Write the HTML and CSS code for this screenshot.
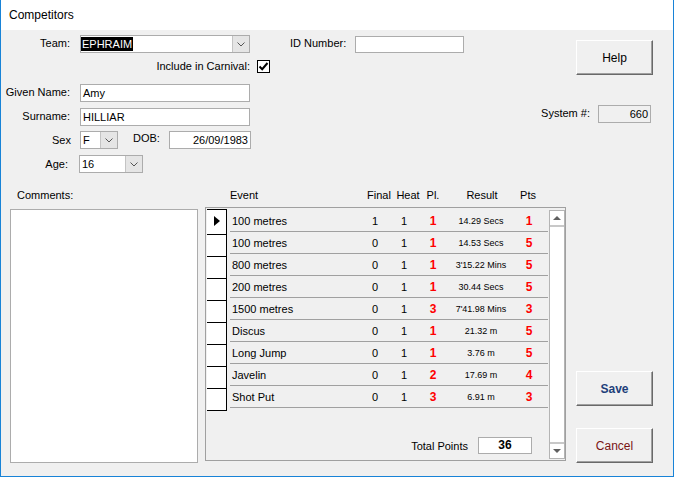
FILE: index.html
```html
<!DOCTYPE html>
<html>
<head>
<meta charset="utf-8">
<link rel="stylesheet" href="styles.css">
</head>
<body>
<div class="window">
  <div class="titlebar">Competitors</div>
  <div class="content">
    <div class="top">
      <div class="form">
        <div class="row r1">
          <span class="lbl w69">Team:</span>
          <div class="combo team">
            <span class="val"><span class="sel">EPHRAIM</span></span>
            <span class="dd"><svg width="8" height="5" viewBox="0 0 8 5"><polyline points="0.5,0.5 4,4 7.5,0.5" fill="none" stroke="#555" stroke-width="1"/></svg></span>
          </div>
          <span class="lbl idlbl">ID Number:</span>
          <div class="input idnum"></div>
        </div>
        <div class="row r2">
          <span class="lbl w249">Include in Carnival:</span>
          <span class="check"><svg width="11" height="11" viewBox="0 0 11 11"><polyline points="1.5,5.5 4.2,8.2 9.5,2" fill="none" stroke="#000" stroke-width="2"/></svg></span>
        </div>
        <div class="row r3">
          <span class="lbl w69">Given Name:</span>
          <div class="input name">Amy</div>
        </div>
        <div class="row r4">
          <span class="lbl w69">Surname:</span>
          <div class="input name">HILLIAR</div>
        </div>
        <div class="row r5">
          <span class="lbl w70 low">Sex</span>
          <div class="combo sex">
            <span class="val">F</span>
            <span class="dd"><svg width="8" height="5" viewBox="0 0 8 5"><polyline points="0.5,0.5 4,4 7.5,0.5" fill="none" stroke="#555" stroke-width="1"/></svg></span>
          </div>
          <span class="lbl doblbl">DOB:</span>
          <div class="input dob">26/09/1983</div>
        </div>
        <div class="row r6">
          <span class="lbl w67 low1">Age:</span>
          <div class="combo age">
            <span class="val">16</span>
            <span class="dd"><svg width="8" height="5" viewBox="0 0 8 5"><polyline points="0.5,0.5 4,4 7.5,0.5" fill="none" stroke="#555" stroke-width="1"/></svg></span>
          </div>
        </div>
      </div>
      <div class="side">
        <button class="btn help">Help</button>
        <div class="sysrow">
          <span class="lbl">System #:</span>
          <div class="input sys">660</div>
        </div>
      </div>
    </div>
    <div class="bottom">
      <div class="comments">
        <div class="clbl">Comments:</div>
        <div class="textarea"></div>
      </div>
      <div class="gridcol">
        <div class="ghead">
          <span></span>
          <span class="left">Event</span>
          <span>Final</span>
          <span>Heat</span>
          <span>Pl.</span>
          <span>Result</span>
          <span>Pts</span>
        </div>
        <div class="gbox">
          <div class="gmain">
            <div class="rowswrap">
              <div class="selector">
                <div class="sc first"><svg width="6" height="10" viewBox="0 0 6 10"><polygon points="0,0 6,5 0,10" fill="#000"/></svg></div>
                <div class="sc"></div>
                <div class="sc"></div>
                <div class="sc"></div>
                <div class="sc"></div>
                <div class="sc"></div>
                <div class="sc"></div>
                <div class="sc"></div>
                <div class="sc"></div>
              </div>
              <div class="rows">
                <div class="drow"><span class="ev">100 metres</span><span>1</span><span>1</span><span class="red">1</span><span class="res">14.29 Secs</span><span class="red">1</span><span></span></div>
                <div class="drow"><span class="ev">100 metres</span><span>0</span><span>1</span><span class="red">1</span><span class="res">14.53 Secs</span><span class="red">5</span><span></span></div>
                <div class="drow"><span class="ev">800 metres</span><span>0</span><span>1</span><span class="red">1</span><span class="res">3'15.22 Mins</span><span class="red">5</span><span></span></div>
                <div class="drow"><span class="ev">200 metres</span><span>0</span><span>1</span><span class="red">1</span><span class="res">30.44 Secs</span><span class="red">5</span><span></span></div>
                <div class="drow"><span class="ev">1500 metres</span><span>0</span><span>1</span><span class="red">3</span><span class="res">7'41.98 Mins</span><span class="red">3</span><span></span></div>
                <div class="drow"><span class="ev">Discus</span><span>0</span><span>1</span><span class="red">1</span><span class="res">21.32 m</span><span class="red">5</span><span></span></div>
                <div class="drow"><span class="ev">Long Jump</span><span>0</span><span>1</span><span class="red">1</span><span class="res">3.76 m</span><span class="red">5</span><span></span></div>
                <div class="drow"><span class="ev">Javelin</span><span>0</span><span>1</span><span class="red">2</span><span class="res">17.69 m</span><span class="red">4</span><span></span></div>
                <div class="drow"><span class="ev">Shot Put</span><span>0</span><span>1</span><span class="red">3</span><span class="res">6.91 m</span><span class="red">3</span><span></span></div>
              </div>
            </div>
            <div class="total">
              <span class="tlbl">Total Points</span>
              <div class="tbox">36</div>
            </div>
          </div>
          <div class="scroll">
            <div class="sbtn up"><svg width="8" height="4" viewBox="0 0 8 4"><polygon points="0,4 4,0 8,4" fill="#606060"/></svg></div>
            <div class="sbtn down"><svg width="8" height="4" viewBox="0 0 8 4"><polygon points="0,0 4,4 8,0" fill="#606060"/></svg></div>
          </div>
        </div>
      </div>
      <div class="btncol">
        <button class="btn save">Save</button>
        <button class="btn cancel">Cancel</button>
      </div>
    </div>
  </div>
</div>
</body>
</html>
```
FILE: styles.css
```css
* { box-sizing: border-box; }
body {
  margin: 0;
  font-family: "Liberation Sans", Arial, sans-serif;
  font-size: 11px;
  color: #000;
}
.window {
  width: 674px;
  height: 477px;
  border: 1px solid #1883d7;
  border-top: none;
  display: flex;
  flex-direction: column;
  background: #f0f0f0;
}
.titlebar {
  height: 30px;
  background: #fff;
  padding-left: 8px;
  font-size: 12px;
  line-height: 30px;
  color: #000;
}
.content { flex: 1; display: flex; flex-direction: column; }
.top { height: 150px; display: flex; }
.form { width: 470px; }
.row { display: flex; align-items: flex-start; height: 18px; }
.r1 { margin-top: 5px; }
.r2 { margin-top: 5px; height: 16px; }
.r3 { margin-top: 10px; }
.r4 { margin-top: 6px; }
.r5 { margin-top: 5px; }
.r6 { margin-top: 6px; }
.lbl { line-height: 14px; padding-top: 1px; white-space: nowrap; }
.w69 { width: 69px; text-align: right; }
.w70 { width: 70px; text-align: right; }
.w67 { width: 67px; text-align: right; }
.w249 { width: 249px; text-align: right; }
.low { padding-top: 2px; }
.low1 { padding-top: 2px; }
.input {
  height: 18px;
  border: 1px solid #acacac;
  background: #fff;
  line-height: 16px;
  padding: 0 2px;
  white-space: nowrap;
}
.combo {
  display: flex;
  height: 18px;
  border: 1px solid #acacac;
  background: #fff;
}
.combo .val { flex: 1; padding-left: 2px; line-height: 16px; }
.combo .dd {
  width: 17px;
  background: #e5e5e5;
  border-left: 1px solid #c4c4c4;
  display: flex;
  align-items: center;
  justify-content: center;
}
.team { margin-left: 10px; width: 170px; }
.team .val { padding-left: 0; }
.sel {
  display: inline-block;
  background: #000;
  color: #fff;
  line-height: 14px;
  margin-top: 1px;
  padding: 0 1px;
}
.idlbl { margin-left: 40px; width: 65px; }
.idnum { width: 109px; height: 17px; margin-top: 1px; }
.check {
  margin-left: 7px;
  margin-top: 2px;
  width: 13px;
  height: 13px;
  border: 1px solid #000;
  background: #fff;
  display: flex;
  align-items: center;
  justify-content: center;
}
.name { margin-left: 10px; width: 170px; }
.sex { margin-left: 9px; width: 38px; }
.doblbl { margin-left: 15px; width: 36px; padding-top: 0; }
.dob { width: 82px; text-align: right; }
.age { margin-left: 11px; width: 64px; }
.side {
  margin-left: auto;
  margin-right: 20px;
  display: flex;
  flex-direction: column;
  align-items: flex-end;
}
.btn {
  width: 77px;
  height: 35px;
  background: #f0f0f0;
  border: 1px solid;
  border-color: #fff #696969 #696969 #fff;
  box-shadow: inset -1px -1px 0 #a0a0a0;
  font-family: "Liberation Sans", Arial, sans-serif;
  font-size: 12px;
  color: #000;
  padding: 0;
}
.help { margin-top: 10px; }
.sysrow { margin-top: 30px; display: flex; margin-right: 2px; }
.sys { margin-left: 8px; width: 53px; background: #f0f0f0; text-align: right; }
.bottom { flex: 1; display: flex; padding: 0 0 13px 9px; }
.comments { width: 188px; display: flex; flex-direction: column; }
.clbl { height: 29px; padding: 8px 0 0 7px; line-height: 14px; }
.textarea { flex: 1; background: #fff; border: 1px solid #acacac; }
.gridcol {
  margin-left: 7px;
  width: 361px;
  display: flex;
  flex-direction: column;
  padding-bottom: 2px;
}
.ghead {
  height: 27px;
  padding-top: 8px;
  line-height: 14px;
  display: grid;
  grid-template-columns: 25px 132px 34px 24px 26px 72px 20px;
  text-align: center;
}
.ghead .left { text-align: left; }
.gbox {
  flex: 1;
  border: 1px solid #a0a0a0;
  display: flex;
  padding: 1px 0 1px 1px;
}
.gmain { flex: 1; display: flex; flex-direction: column; }
.rowswrap { display: flex; align-items: flex-start; }
.selector {
  width: 20px;
  background: #fff;
  border-top: 1px solid #000;
  border-right: 1px solid #000;
}
.sc { height: 22px; border-bottom: 1px solid #000; }
.sc.first {
  height: 25px;
  display: flex;
  align-items: center;
  justify-content: center;
  padding-bottom: 2px;
}
.rows { margin-left: 3px; margin-top: 1px; width: 318px; }
.drow {
  display: grid;
  grid-template-columns: 132px 26px 32px 26px 70px 26px 6px;
  height: 22px;
  border-bottom: 1px solid #a0a0a0;
  align-items: center;
  text-align: center;
  line-height: 14px;
}
.drow .ev { text-align: left; padding-left: 2px; }
.red { color: #ff0000; font-weight: bold; font-size: 12px; }
.res { font-size: 9px; }
.total {
  margin-top: auto;
  margin-right: 17px;
  margin-bottom: 5px;
  display: flex;
  justify-content: flex-end;
  align-items: center;
}
.tlbl { margin-right: 10px; }
.tbox {
  width: 54px;
  height: 17px;
  background: #fff;
  border: 1px solid #acacac;
  text-align: center;
  font-weight: bold;
  font-size: 12px;
  line-height: 15px;
}
.scroll {
  width: 16px;
  margin: 1px 0 0 0;
  border: 1px solid #b4b4b4;
  background: #fff;
  display: flex;
  flex-direction: column;
  justify-content: space-between;
}
.sbtn {
  height: 16px;
  display: flex;
  align-items: center;
  justify-content: center;
}
.sbtn.up { border-bottom: 2px solid #c8c8c8; }
.sbtn.down { border-top: 2px solid #c8c8c8; }
.btncol {
  margin-left: 10px;
  width: 77px;
  display: flex;
  flex-direction: column;
  justify-content: flex-end;
}
.save { font-weight: bold; color: #1e3f7a; margin-bottom: 22px; }
.cancel { color: #7a1414; }
```
